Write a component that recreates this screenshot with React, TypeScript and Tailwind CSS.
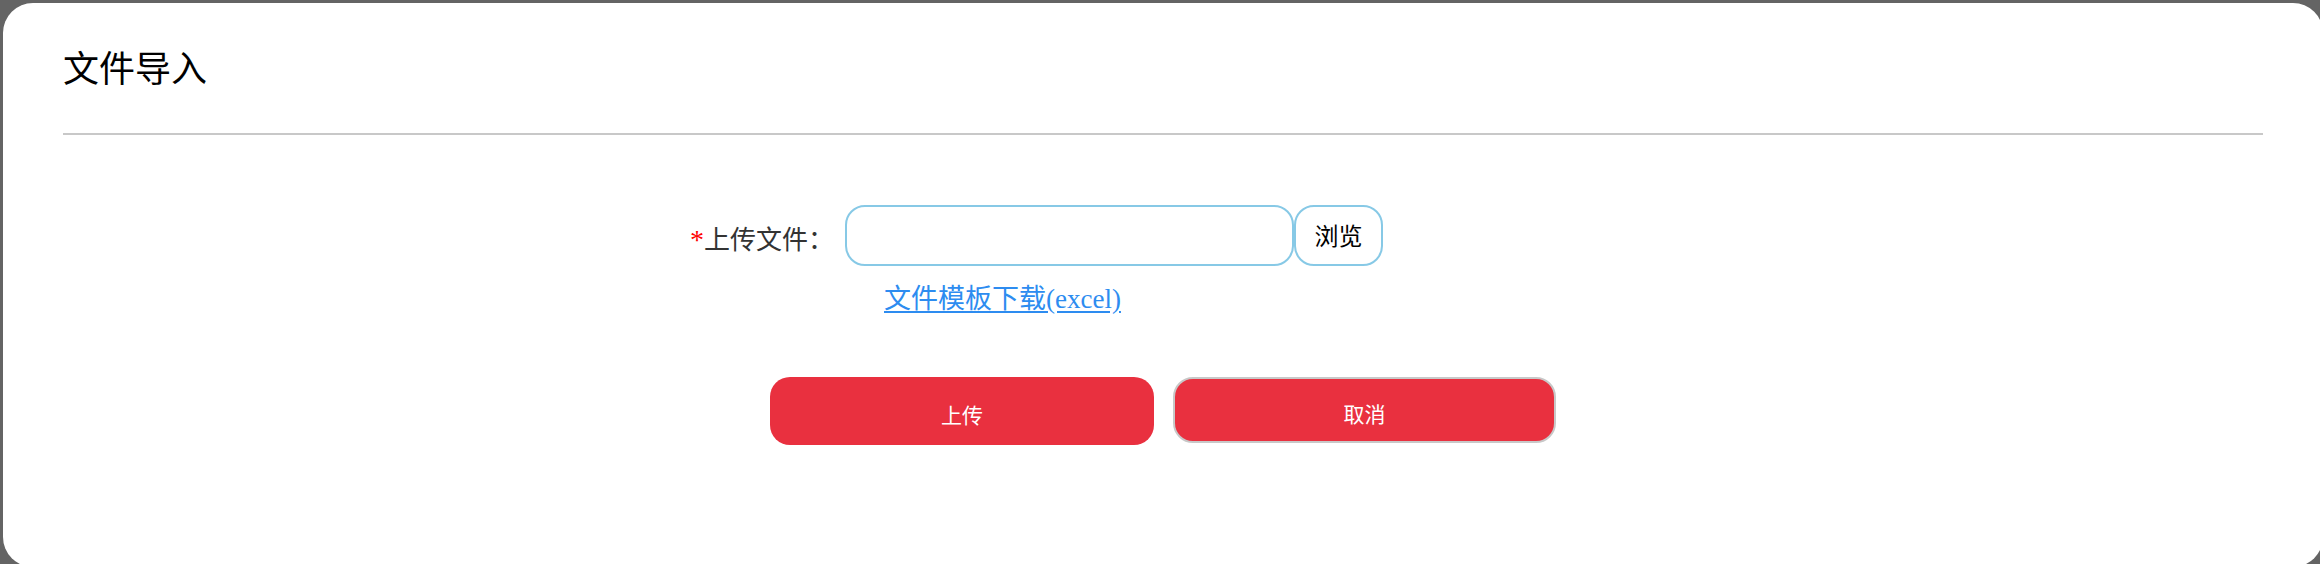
import React from 'react';

const serif = 'font-["Liberation_Serif","Noto_Sans_CJK_SC",serif]';

function UploadRow() {
  return (
    <div className="mx-auto w-[946px]">
      <div className="flex items-center">
        <label className={`flex w-[155px] shrink-0 items-center pt-[11px] text-[26px] leading-[26px] text-[#333] ${serif}`}>
          <span className="self-start text-[28px] leading-[24px] text-[#f00]">*</span>
          <span>上传文件：</span>
        </label>
        <input type="text" className="h-[61px] w-[449px] rounded-[20px] border-2 border-[#87c9e6] bg-white px-3 outline-none" />
        <button className={`h-[61px] w-[89px] rounded-[20px] border-2 border-[#87c9e6] bg-white pt-[3px] text-[24px] text-black ${serif}`}>
          浏览
        </button>
      </div>
      <a href="#" className={`mt-[20px] ml-[194px] inline-block text-[27px] leading-[27px] text-[#2d8cf0] underline underline-offset-[3px] ${serif}`}>
        文件模板下载(excel)
      </a>
    </div>
  );
}

export default function App() {
  return (
    <div className="h-[564px] w-full overflow-hidden bg-[#646464]">
      <div className="ml-[3px] mt-[3px] h-[564px] w-[2320px] rounded-[30px] bg-white px-[60px] pt-[49px]">
        <h1 className={`text-[36px] leading-[36px] text-black ${serif}`}>文件导入</h1>
        <div className="mt-[45px] h-[2px] bg-[#c8c8c8]" />

        <div className="mt-[70px]">
          <UploadRow />
        </div>

        <div className="mt-[63px] flex justify-center gap-[19px] font-['Noto_Sans_CJK_SC',sans-serif]">
          <button className="h-[68px] w-[384px] rounded-[20px] bg-[#e9303f] pt-2 text-[21px] text-white">上传</button>
          <button className="h-[66px] w-[383px] rounded-[20px] border-2 border-[#c8c8c8] bg-[#e9303f] pt-2 text-[21px] text-white">取消</button>
        </div>
      </div>
    </div>
  );
}
